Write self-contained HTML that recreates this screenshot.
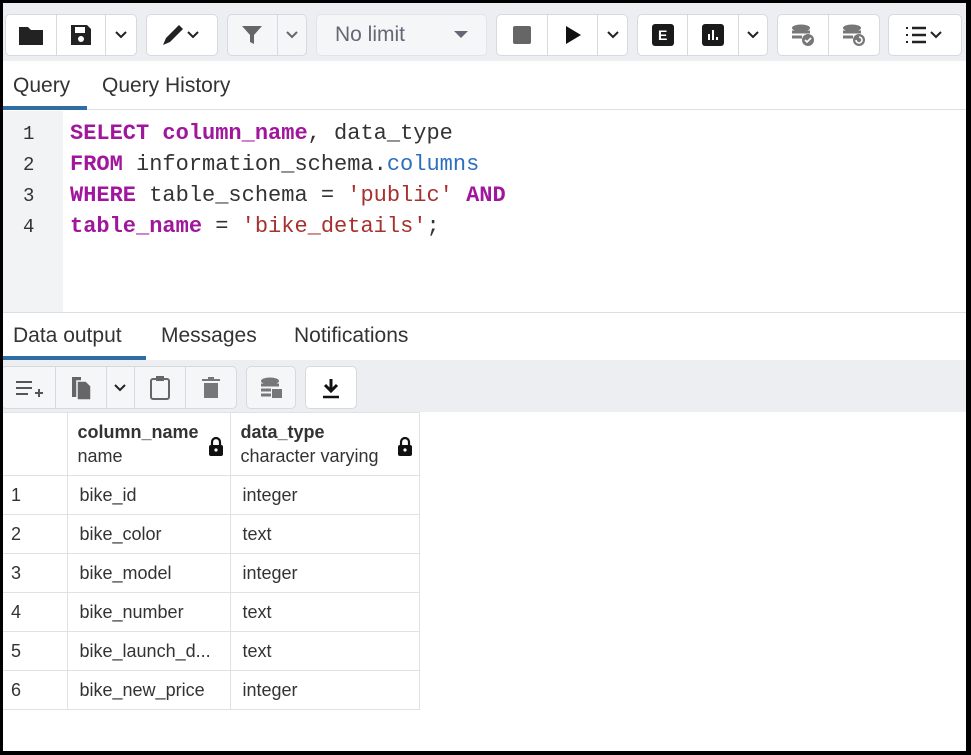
<!DOCTYPE html>
<html><head><meta charset="utf-8"><style>
*{box-sizing:border-box;margin:0;padding:0}
body{width:971px;height:755px;background:#000;position:relative;overflow:hidden;font-family:"Liberation Sans",sans-serif}
#app{position:absolute;left:3px;top:3px;width:963px;height:748px;background:#fff;overflow:hidden}
.a{position:absolute}
.tb{background:#eceef2}
.g{position:absolute;border:1px solid #d6d9de;border-radius:5px;background:#fff;display:flex;height:42px}
.g div{border-right:1px solid #d6d9de;display:flex;align-items:center;justify-content:center;height:100%}
.g div:last-child{border-right:none}
.tab{position:absolute;font-size:21px;color:#333}
.code{position:absolute;left:67px;font-family:"Liberation Mono",monospace;font-size:22px;color:#333;white-space:pre}
.ln{position:absolute;left:20px;width:20px;font-family:"Liberation Mono",monospace;font-size:19px;color:#333}
.k{color:#a0179d;font-weight:bold}.s{color:#a7312f}.b{color:#2c6fc0}
td{border:1px solid #dfe1e5;font-size:18px;color:#333;height:39px;padding-left:12px}
table{border-collapse:collapse;position:absolute;left:0;top:409px}
</style></head><body><div id="app">
<div class="a tb" style="left:0;top:0;width:963px;height:58px"></div>
<div class="g" style="left:2px;top:11px;width:132px"><div style="width:52px"><svg width="26" height="22"><path d="M1 3h9l3 3h12v15H1z" fill="#222"/></svg></div><div style="width:50px"><svg width="22" height="22"><path d="M1 1h16l4 4v16H1z" fill="#222"/><rect x="5" y="3" width="10" height="6" fill="#fff"/><circle cx="11" cy="15" r="3" fill="#fff"/></svg></div><div style="width:30px"><svg width="14" height="10"><path d="M2 2l5 5 5-5" stroke="#222" stroke-width="2" fill="none"/></svg></div></div>
<div class="g" style="left:143px;top:11px;width:72px"><div style="width:72px"><svg width="44" height="26"><path d="M3 23l3-7 13-13 4 4-13 13z" fill="#222"/><path d="M28 10l5 5 5-5" stroke="#222" stroke-width="2" fill="none"/></svg></div></div>
<div class="g" style="left:224px;top:11px;width:80px;background:#f5f6f8"><div style="width:51px"><svg width="22" height="22"><path d="M1 2h20l-8 9v9l-4-2v-7z" fill="#666"/></svg></div><div style="width:29px"><svg width="14" height="10"><path d="M2 2l5 5 5-5" stroke="#666" stroke-width="2" fill="none"/></svg></div></div>
<div class="g" style="left:313px;top:11px;width:171px;background:#f5f6f8;border-color:#e2e4e8"><div style="width:171px;justify-content:space-between;padding:0 18px"><span style="font-size:21px;color:#667">No limit</span><svg width="14" height="8"><path d="M0 0h14l-7 7z" fill="#667"/></svg></div></div>
<div class="g" style="left:493px;top:11px;width:132px"><div style="width:52px"><div style="width:18px;height:18px;background:#666;border-radius:2px"></div></div><div style="width:51px"><svg width="18" height="20"><path d="M2 1l15 9-15 9z" fill="#111"/></svg></div><div style="width:29px"><svg width="14" height="10"><path d="M2 2l5 5 5-5" stroke="#222" stroke-width="2" fill="none"/></svg></div></div>
<div class="g" style="left:634px;top:11px;width:131px"><div style="width:51px"><div style="width:22px;height:22px;background:#1a1a1a;border-radius:3px;color:#fff;font-size:14px;font-weight:bold;display:flex;align-items:center;justify-content:center">E</div></div><div style="width:52px"><svg width="22" height="22"><rect width="22" height="22" rx="3" fill="#1a1a1a"/><path d="M7 16v-6M11 16V6M15 16v-3" stroke="#fff" stroke-width="2"/></svg></div><div style="width:28px"><svg width="14" height="10"><path d="M2 2l5 5 5-5" stroke="#222" stroke-width="2" fill="none"/></svg></div></div>
<div class="g" style="left:774px;top:11px;width:103px"><div style="width:52px"><svg width="26" height="24"><ellipse cx="11" cy="5" rx="9" ry="3.5" fill="#777"/><path d="M2 9h18M2 14h10" stroke="#777" stroke-width="3"/><circle cx="18" cy="17" r="6" fill="#777"/><path d="M15 17l2 2 4-4" stroke="#fff" stroke-width="1.6" fill="none"/></svg></div><div style="width:51px"><svg width="26" height="24"><ellipse cx="11" cy="5" rx="9" ry="3.5" fill="#777"/><path d="M2 9h18M2 14h10" stroke="#777" stroke-width="3"/><circle cx="18" cy="17" r="6" fill="#777"/><path d="M15 17a3 3 0 1 0 3-3" stroke="#fff" stroke-width="1.6" fill="none"/></svg></div></div>
<div class="g" style="left:885px;top:11px;width:74px"><div style="width:74px"><svg width="44" height="22"><path d="M9 4h14M9 11h14M9 18h14" stroke="#222" stroke-width="2.4"/><path d="M3 4h2M3 11h2M3 18h2" stroke="#222" stroke-width="2"/><path d="M28 8l5 5 5-5" stroke="#222" stroke-width="2" fill="none"/></svg></div></div>

<div class="a" style="left:0;top:58px;width:963px;height:49px;border-bottom:1px solid #dcdfe3"></div>
<div class="tab" style="left:10px;top:71px">Query</div>
<div class="tab" style="left:99px;top:71px">Query History</div>
<div class="a" style="left:0;top:103px;width:84px;height:4px;background:#2e6ea3"></div>

<div class="a" style="left:0;top:108px;width:60px;height:201px;background:#f2f3f5"></div>
<div class="ln" style="top:120px">1</div><div class="ln" style="top:151px">2</div><div class="ln" style="top:182px">3</div><div class="ln" style="top:213px">4</div>
<div class="code" style="top:118px"><span class="k">SELECT</span> <span class="k">column_name</span>, data_type</div>
<div class="code" style="top:149px"><span class="k">FROM</span> information_schema.<span class="b">columns</span></div>
<div class="code" style="top:180px"><span class="k">WHERE</span> table_schema = <span class="s">'public'</span> <span class="k">AND</span></div>
<div class="code" style="top:211px"><span class="k">table_name</span> = <span class="s">'bike_details'</span>;</div>

<div class="a" style="left:0;top:309px;width:963px;height:1px;background:#dcdfe3"></div>
<div class="tab" style="left:10px;top:321px">Data output</div>
<div class="tab" style="left:158px;top:321px">Messages</div>
<div class="tab" style="left:291px;top:321px">Notifications</div>
<div class="a" style="left:0;top:353px;width:143px;height:4px;background:#2e6ea3"></div>
<div class="a tb" style="left:0;top:357px;width:963px;height:52px"></div>
<div class="g" style="left:-2px;top:363px;width:236px;height:43px;background:#f5f6f8"><div style="width:54px"><svg width="30" height="20"><path d="M3 4h16M3 10h16M3 16h12M22 15h8M26 11v8" stroke="#555" stroke-width="2"/></svg></div><div style="width:52px"><svg width="24" height="26"><path d="M3 2h9v20H3z" fill="#666"/><path d="M8 6h9l5 5v14H8z" fill="#666" stroke="#f5f6f8" stroke-width="1.5"/></svg></div><div style="width:28px"><svg width="14" height="10"><path d="M2 2l5 5 5-5" stroke="#222" stroke-width="2" fill="none"/></svg></div><div style="width:52px"><svg width="22" height="26"><rect x="2" y="4" width="18" height="20" rx="2" stroke="#666" stroke-width="2" fill="none"/><rect x="7" y="1" width="8" height="5" fill="#666"/></svg></div><div style="width:50px"><svg width="20" height="24"><path d="M1 4h18M7 2h6" stroke="#777" stroke-width="2"/><path d="M3 7h14v15H3z" fill="#777"/></svg></div></div>
<div class="g" style="left:243px;top:363px;width:50px;height:43px;background:#f5f6f8"><div style="width:50px"><svg width="24" height="24"><ellipse cx="11" cy="5" rx="9" ry="3.5" fill="#777"/><path d="M2 9h18M2 14h10M2 19h10" stroke="#777" stroke-width="3"/><rect x="13" y="13" width="10" height="9" fill="#777"/></svg></div></div>
<div class="g" style="left:302px;top:363px;width:52px;height:43px"><div style="width:52px"><svg width="20" height="22"><path d="M10 2v10M4 8l6 6 6-6" stroke="#111" stroke-width="3" fill="none"/><path d="M2 20h16" stroke="#111" stroke-width="2.5"/></svg></div></div>

<table>
<tr style="height:63px"><td style="width:64px;border-left:none"></td><td style="width:163px;position:relative;padding-left:10px;line-height:24px"><b style="font-weight:600">column_name</b><br>name<svg class="a" style="right:6px;top:23px" width="16" height="20"><path d="M4 9V6a4 4 0 0 1 8 0v3" stroke="#111" stroke-width="2.2" fill="none"/><rect x="1" y="9" width="14" height="11" rx="2" fill="#111"/><circle cx="8" cy="14" r="1.6" fill="#fff"/></svg></td><td style="width:189px;position:relative;padding-left:10px;line-height:24px"><b style="font-weight:600">data_type</b><br>character varying<svg class="a" style="right:6px;top:23px" width="16" height="20"><path d="M4 9V6a4 4 0 0 1 8 0v3" stroke="#111" stroke-width="2.2" fill="none"/><rect x="1" y="9" width="14" height="11" rx="2" fill="#111"/><circle cx="8" cy="14" r="1.6" fill="#fff"/></svg></td></tr>
<tr><td style="border-left:none;padding-left:8px">1</td><td>bike_id</td><td>integer</td></tr>
<tr><td style="border-left:none;padding-left:8px">2</td><td>bike_color</td><td>text</td></tr>
<tr><td style="border-left:none;padding-left:8px">3</td><td>bike_model</td><td>integer</td></tr>
<tr><td style="border-left:none;padding-left:8px">4</td><td>bike_number</td><td>text</td></tr>
<tr><td style="border-left:none;padding-left:8px">5</td><td>bike_launch_d...</td><td>text</td></tr>
<tr><td style="border-left:none;padding-left:8px">6</td><td>bike_new_price</td><td>integer</td></tr>
</table>
</div></body></html>
